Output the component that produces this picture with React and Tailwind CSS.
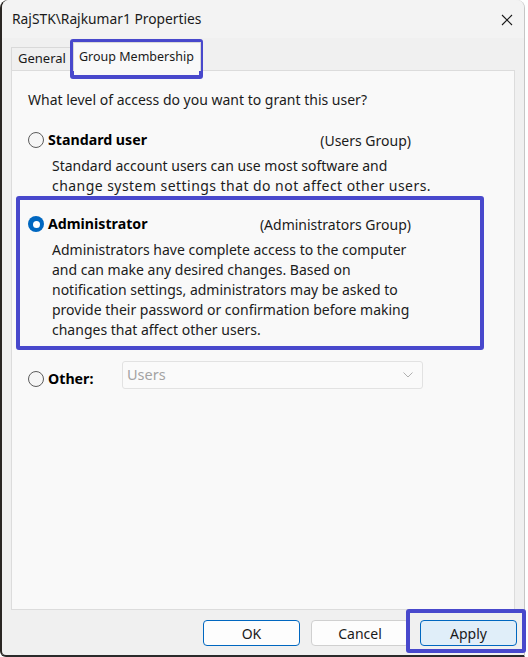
import React from "react";

const font = { fontFamily: '"Noto Sans", "Open Sans", sans-serif' };

function Radio({ checked }) {
  if (checked) {
    return (
      <span className="flex h-[16px] w-[16px] shrink-0 items-center justify-center rounded-full bg-[#0067c0]">
        <span className="h-[7px] w-[7px] rounded-full bg-white" />
      </span>
    );
  }
  return <span className="h-[16px] w-[16px] shrink-0 rounded-full border border-[#5c5c5c] bg-[#f6f6f6]" />;
}

function Option({ checked, label, group, lines }) {
  return (
    <div>
      <div className="flex h-[20px] items-center">
        <Radio checked={checked} />
        <span className="ml-[4px] text-[14.2px] font-bold text-black">{label}</span>
        <span className="ml-auto mr-[103px] text-[14px] text-[#1b1b1b]">{group}</span>
      </div>
      <div className="mt-[6px] pl-[24px] text-[14px] leading-[20px] text-[#1b1b1b]">
        {lines.map((l) => (
          <div key={l.text} className={l.wide ? "tracking-[0.45px]" : ""}>
            {l.text}
          </div>
        ))}
      </div>
    </div>
  );
}

export default function App() {
  return (
    <div className="relative h-[657px] w-[528px] bg-white" style={font}>
      <div className="flex h-[657px] w-[525px] flex-col rounded-t-lg rounded-bl-md border-b-2 border-l-2 border-r border-b-[#2a2a2a] border-l-[#2a2623] border-r-[#c6c6c6] bg-[#f0f0f0]">
        {/* title bar */}
        <div className="flex h-[38px] shrink-0 items-center justify-between rounded-t-lg bg-[#f3f3f3] pl-[10px] pr-[11px]">
          <span className="text-[13.8px] text-[#1a1a1a]">RajSTK\Rajkumar1 Properties</span>
          <svg width="12" height="12" viewBox="0 0 12 12" className="mt-[1px]">
            <path d="M1 1L11 11M11 1L1 11" stroke="#1a1a1a" strokeWidth="1.1" />
          </svg>
        </div>

        {/* tabs */}
        <div className="flex h-[32px] shrink-0 items-end pl-[9px]">
          <div className="flex h-[23px] w-[62px] items-center border border-b-0 border-[#d9d9d9] bg-[#f0f0f0] pl-[6px] text-[13px] text-[#1a1a1a]">
            General
          </div>
          <div className="relative z-10 -mb-px flex h-[29px] w-[128px] items-center border border-b-0 border-[#d9d9d9] bg-[#f9f9f9] pl-[5px] text-[12.5px] text-[#1a1a1a]">
            Group Membership
          </div>
        </div>

        {/* panel */}
        <div className="ml-[9px] h-[540px] w-[504px] shrink-0 border border-[#dcdcdc] bg-[#f9f9f9] pl-[16px] pt-[19px]">
          <div className="text-[14px] leading-[20px] text-[#1b1b1b]">
            What level of access do you want to grant this user?
          </div>
          <div className="mt-[20px]">
            <Option
              label="Standard user"
              group="(Users Group)"
              lines={[
                { text: "Standard account users can use most software and" },
                { text: "change system settings that do not affect other users.", wide: true },
              ]}
            />
          </div>
          <div className="mt-[18px]">
            <Option
              checked
              label="Administrator"
              group="(Administrators Group)"
              lines={[
                { text: "Administrators have complete access to the computer" },
                { text: "and can make any desired changes. Based on" },
                { text: "notification settings, administrators may be asked to" },
                { text: "provide their password or confirmation before making" },
                { text: "changes that affect other users." },
              ]}
            />
          </div>
          <div className="mt-[21px] flex items-center">
            <div className="mt-[7px] flex items-center">
              <Radio />
              <span className="ml-[4px] w-[74px] text-[14.2px] font-bold text-black">Other:</span>
            </div>
            <div className="flex h-[28px] w-[301px] items-center justify-between rounded-[3px] border border-[#e2e2e2] bg-[#fafafa] pl-[4px] pr-[9px] text-[14.5px] text-[#a3a3a3]">
              <span>Users</span>
              <svg width="10" height="6" viewBox="0 0 10 6">
                <path d="M0.5 0.5L5 5L9.5 0.5" fill="none" stroke="#b0b0b0" strokeWidth="1" />
              </svg>
            </div>
          </div>
        </div>

        {/* buttons */}
        <div className="flex justify-end gap-[11px] pr-[7px] pt-[10px]">
          <button className="h-[26px] w-[97px] rounded-[4px] border border-[#0067c0] bg-[#fdfdfd] text-[14px] text-[#1a1a1a]">
            OK
          </button>
          <button className="h-[26px] w-[98px] rounded-[4px] border border-[#d0d0d0] bg-[#fdfdfd] text-[14px] text-[#1a1a1a]">
            Cancel
          </button>
          <button className="h-[26px] w-[97px] rounded-[4px] border border-[#0067c0] bg-[#e0eef9] text-[14px] text-[#1a1a1a]">
            Apply
          </button>
        </div>
      </div>

      {/* annotation highlights */}
      <div className="pointer-events-none absolute left-[70px] top-[39px] h-[40px] w-[133px] rounded-[3px] border-[4px] border-[#4848cc]" />
      <div className="pointer-events-none absolute left-[16px] top-[196px] h-[154px] w-[468px] rounded-[3px] border-[4px] border-[#4848cc]" />
      <div className="pointer-events-none absolute left-[406px] top-[609px] h-[44px] w-[120px] rounded-[3px] border-[4px] border-[#4848cc]" />
    </div>
  );
}
